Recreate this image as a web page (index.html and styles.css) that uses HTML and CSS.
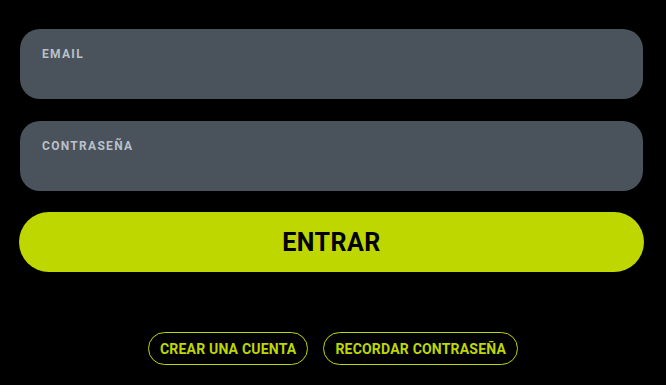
FILE: index.html
```html
<!DOCTYPE html>
<html lang="es">
<head>
<meta charset="utf-8">
<title>Entrar</title>
<link rel="stylesheet" href="styles.css">
</head>
<body>
<form class="login">
  <label class="field">
    <span class="field-label">EMAIL</span>
  </label>
  <label class="field field-second">
    <span class="field-label">CONTRASEÑA</span>
  </label>
  <button type="button" class="submit">ENTRAR</button>
  <div class="links">
    <a class="pill" href="#">CREAR UNA CUENTA</a>
    <a class="pill" href="#">RECORDAR CONTRASEÑA</a>
  </div>
</form>
</body>
</html>
```
FILE: styles.css
```css
html, body {
  margin: 0;
  background: #000;
}
body {
  font-family: "Roboto", "Liberation Sans", sans-serif;
}
.login {
  display: flex;
  flex-direction: column;
  padding: 29px 23px 0 20px;
}
.field {
  display: block;
  box-sizing: border-box;
  height: 70px;
  background: #4a525b;
  border-radius: 20px;
  padding: 18px 22px 0;
}
.field-second {
  margin-top: 22px;
}
.field-label {
  display: block;
  color: #b9c1c9;
  font-size: 12px;
  font-weight: 700;
  letter-spacing: 1.3px;
  line-height: 14px;
}
.submit {
  margin: 21px -1px 0 -1px;
  height: 60px;
  border: 0;
  border-radius: 30px;
  background: #bfd700;
  color: #000;
  font-family: inherit;
  font-size: 25px;
  font-weight: 700;
  letter-spacing: 0.5px;
  padding: 0;
}
.links {
  display: flex;
  justify-content: center;
  gap: 15px;
  margin-top: 60px;
  padding-left: 3px;
}
.pill {
  box-sizing: border-box;
  height: 33px;
  display: flex;
  align-items: center;
  padding: 0 11px;
  border: 1px solid #bfd700;
  border-radius: 17px;
  color: #bfd700;
  font-size: 14px;
  font-weight: 700;
  letter-spacing: 0.2px;
  text-decoration: none;
}
```
